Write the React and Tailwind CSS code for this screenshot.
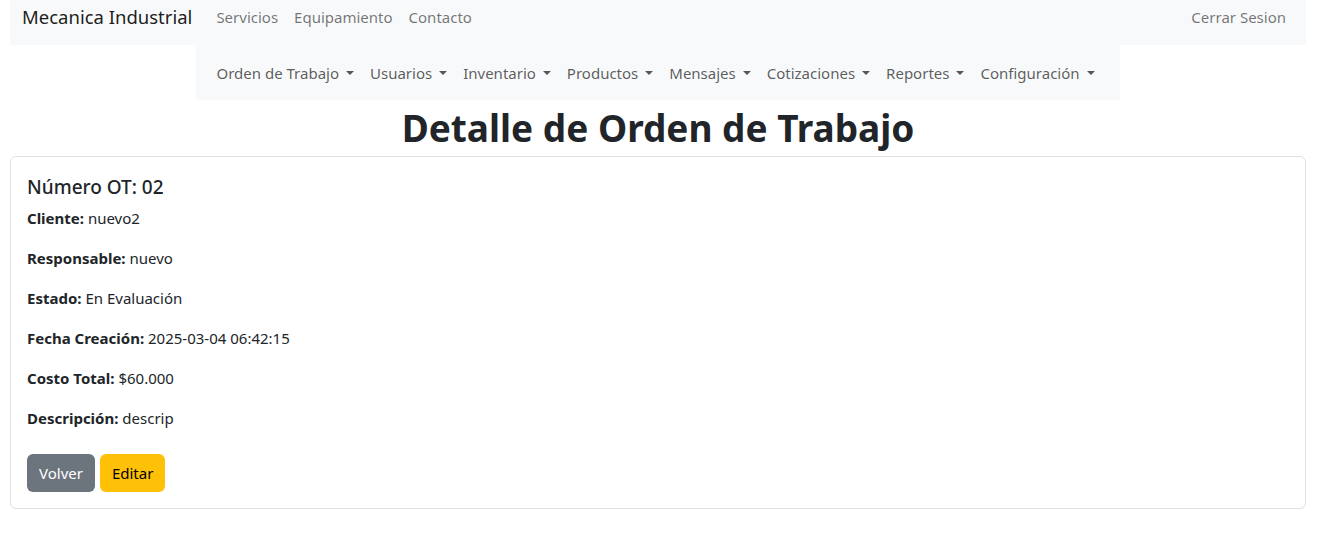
import React from "react";

const font = { fontFamily: '"Noto Sans", "Open Sans", sans-serif' };

function Caret() {
  return (
    <span className="inline-block ml-[7px] align-[0.24em] w-0 h-0 border-t-[4.5px] border-t-current border-x-[4.5px] border-x-transparent border-b-0" />
  );
}

const menus = [
  "Orden de Trabajo",
  "Usuarios",
  "Inventario",
  "Productos",
  "Mensajes",
  "Cotizaciones",
  "Reportes",
  "Configuración",
];

const rows = [
  ["Cliente:", "nuevo2"],
  ["Responsable:", "nuevo"],
  ["Estado:", "En Evaluación"],
  ["Fecha Creación:", "2025-03-04 06:42:15"],
  ["Costo Total:", "$60.000"],
  ["Descripción:", "descrip"],
];

export default function App() {
  return (
    <div className="min-h-[536px] bg-white text-[#212529] pl-[10px] pr-[36px]" style={font}>
      <nav className="h-[45px] bg-[#f8f9fa] flex items-center px-3">
        <span className="text-[18.5px] leading-[30px] text-black/90 mr-4 -mt-[11px]">Mecanica Industrial</span>
        <div className="flex -mt-[11px]">
          {["Servicios", "Equipamiento", "Contacto"].map((t) => (
            <a key={t} className="px-2 text-[15px] leading-6 text-black/55">{t}</a>
          ))}
        </div>
        <a className="ml-auto px-2 text-[15px] leading-6 text-black/55 -mt-[11px]">Cerrar Sesion</a>
      </nav>
      <div className="flex justify-center">
        <div className="h-[55px] bg-[#f8f9fa] flex items-center pl-[12px] pr-[17px]">
          {menus.map((m) => (
            <a key={m} className="px-2 text-[15px] leading-6 text-black/65 whitespace-nowrap">
              {m}
              <Caret />
            </a>
          ))}
        </div>
      </div>
      <h1 className="text-center text-[37px] leading-[48px] font-bold mt-[4px] mb-[4px]">Detalle de Orden de Trabajo</h1>
      <div className="border border-[#dee2e6] rounded-[6px] px-4 pt-[18px] pb-4">
        <h5 className="text-[19px] leading-6 font-medium mb-[7px]">Número OT: 02</h5>
        {rows.map(([k, v]) => (
          <p key={k} className="text-[15px] leading-6 mb-4">
            <strong className="font-bold">{k}</strong> {v}
          </p>
        ))}
        <div className="flex gap-[5px] mt-[24px]">
          <button className="h-[38px] px-3 rounded-[6px] bg-[#6c757d] text-white text-[15px]">Volver</button>
          <button className="h-[38px] px-3 rounded-[6px] bg-[#ffc107] text-black text-[15px]">Editar</button>
        </div>
      </div>
    </div>
  );
}
